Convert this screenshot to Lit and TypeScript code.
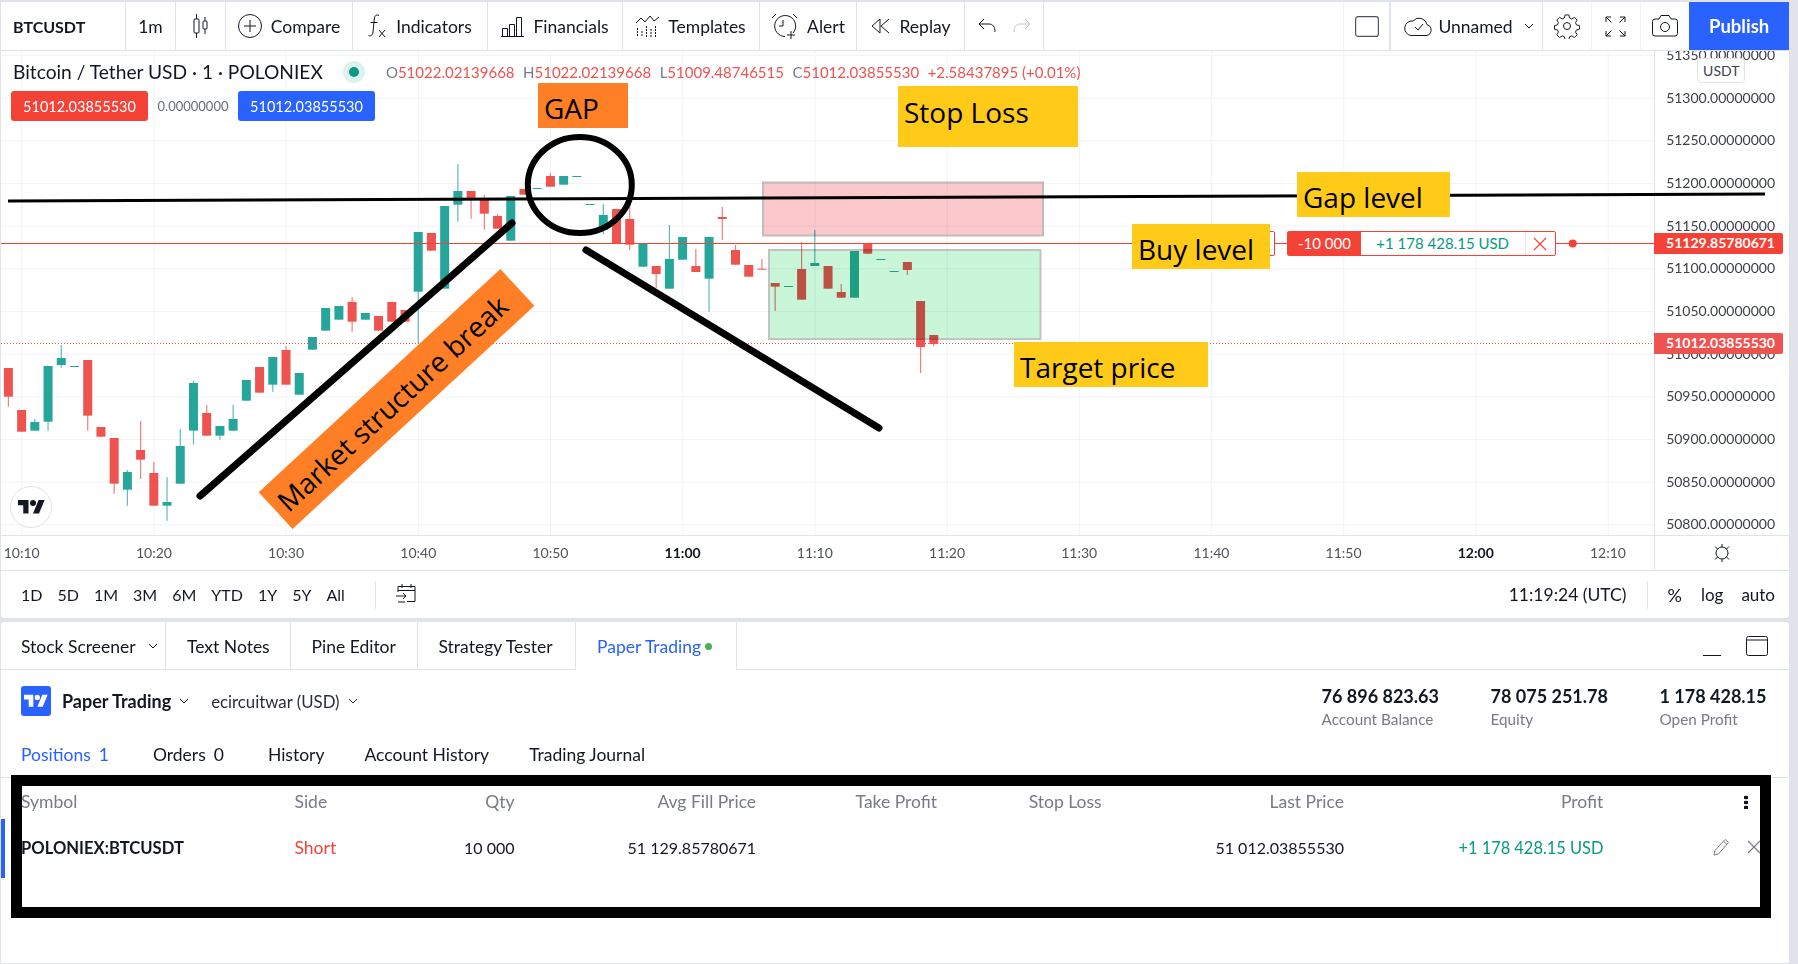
import { LitElement, html, svg, css } from "lit";
import { customElement } from "lit/decorators.js";

// [index, colour, bodyTop, bodyBottom, wickTop, wickBottom]
// y values are measured from the crop: page y = 130 + v / 3
type Candle = [number, "g" | "r", number, number, number?, number?];
const CANDLES: Candle[] = [
  [0, "r", 714, 800, 714, 830], [1, "r", 840, 905], [2, "g", 876, 902, 867], [3, "g", 708, 875, 708, 902],
  [4, "g", 684, 705, 645, 713], [5, "g", 708, 710], [6, "r", 690, 857, 690, 902], [7, "r", 891, 920],
  [8, "r", 924, 1061, 924, 1091], [9, "g", 1026, 1079, 1020, 1127], [10, "r", 960, 989, 873, 1047], [11, "r", 1029, 1127, 996],
  [12, "g", 1116, 1127, 1041, 1172], [13, "g", 948, 1061, 897], [14, "g", 759, 902, 753, 944], [15, "r", 849, 917, 825],
  [16, "g", 888, 917, 888, 929], [17, "g", 867, 902, 825], [18, "g", 750, 812], [19, "r", 711, 788],
  [20, "g", 681, 764, 681, 785], [21, "r", 660, 764, 648], [22, "g", 729, 794], [23, "g", 621, 659],
  [24, "g", 534, 602], [25, "g", 528, 569], [26, "r", 516, 575, 501, 605], [27, "g", 549, 569],
  [28, "r", 558, 602], [29, "r", 516, 575], [30, "r", 540, 575], [31, "g", 306, 485, 306, 640],
  [32, "r", 309, 362], [33, "g", 228, 476], [34, "g", 183, 224, 102, 275], [35, "r", 183, 205, 183, 266],
  [36, "r", 204, 251, 195, 299], [37, "r", 258, 296, 252], [38, "g", 198, 332], [39, "r", 177, 194],
  [40, "g", 174, 176], [41, "r", 138, 170, 129], [42, "g", 138, 164], [43, "g", 138, 140],
  [44, "g", 222, 224], [45, "g", 255, 300, 222, 312], [46, "r", 237, 340], [47, "r", 267, 344, 213, 360],
  [48, "g", 341, 410], [49, "r", 408, 432, 408, 475], [50, "g", 387, 476, 285], [51, "g", 321, 389],
  [52, "r", 408, 426, 357], [53, "g", 321, 446, 321, 545], [54, "r", 261, 267, 231, 330], [55, "r", 360, 404, 345],
  [56, "r", 405, 440], [57, "r", 416, 418, 387], [58, "r", 459, 470, 459, 543], [59, "g", 468, 470],
  [60, "r", 417, 509, 336], [61, "g", 399, 408, 300], [62, "r", 408, 476], [63, "r", 486, 503, 462],
  [64, "g", 363, 503], [65, "r", 340, 371], [66, "g", 387, 389], [67, "g", 423, 425],
  [68, "r", 396, 420, 396, 435], [69, "r", 513, 651, 513, 729], [70, "r", 615, 642, 615, 648],
];

const PRICES = ["51350", "51300", "51250", "51200", "51150", "51100", "51050", "51000", "50950", "50900", "50850", "50800"];
const TIMES = ["10:10", "10:20", "10:30", "10:40", "10:50", "11:00", "11:10", "11:20", "11:30", "11:40", "11:50", "12:00", "12:10"];
const RANGES = ["1D", "5D", "1M", "3M", "6M", "YTD", "1Y", "5Y", "All"];

const cy = (v: number) => 130 + v / 3;

const chevron = html`<svg class="chev" width="10" height="6" viewBox="0 0 10 6"><path d="M1 1l4 4 4-4" fill="none" stroke="currentColor"/></svg>`;
const tvPath = svg`<path d="M14 22H7V11H0V4h14v18zM28 22h-8l7.500-18h8L28 22z"/><circle cx="20" cy="8" r="4"/>`;

const ic = {
  candles: html`<svg width="16" height="26" viewBox="0 0 16 26" fill="none" stroke="currentColor"><path d="M3.500 1v5M3.500 20v5M12 4v4M12 16v5"/><rect x="1" y="6" width="5" height="14" rx="1"/><rect x="10" y="8" width="4" height="8" rx="1"/></svg>`,
  compare: html`<svg width="24" height="24" viewBox="0 0 24 24" fill="none" stroke="currentColor"><circle cx="12" cy="12" r="11.500"/><path d="M12 6v12M6 12h12"/></svg>`,
  fx: html`<svg width="19" height="26" viewBox="0 0 19 26" fill="none" stroke="currentColor"><path d="M11 2.500C8 1 6.500 3 6.300 6L5 19c-.3 3-2 4.500-4.500 3.500M2.500 9.500h7M11 17l6 7M17 17l-6 7"/></svg>`,
  financials: html`<svg width="23" height="21" viewBox="0 0 23 21" fill="none" stroke="currentColor"><path d="M0 20.500h23M1.500 20.500v-8h5v8M8.500 20.500v-12h5v12M15.500 20.500V1.500h5v19"/></svg>`,
  templates: html`<svg width="23" height="22" viewBox="0 0 23 22" fill="none" stroke="currentColor"><path d="M0 8l5-5 4 4 5-6 4 5 5-4"/><path d="M1.500 13v9M6 16v6M10.500 11v11M15 14v8M19.500 11v11" stroke-dasharray="2 1"/></svg>`,
  alert: html`<svg width="27" height="27" viewBox="0 0 27 27" fill="none" stroke="currentColor"><path d="M14 23.500a10.500 10.500 0 1 1 8-3.500"/><path d="M12 7v6h-4M1 5l4-4M22 1l4 4M20 18v8M16 22h8"/></svg>`,
  replay: html`<svg width="20" height="18" viewBox="0 0 20 18" fill="none" stroke="currentColor"><path d="M10 2L2 9l8 7zM19 2l-8 7 8 7"/></svg>`,
  undo: html`<svg width="18" height="16" viewBox="0 0 18 16" fill="none" stroke="currentColor"><path d="M6 1L1 6l5 5M1 6h10c4 0 6 3 6 8"/></svg>`,
  redo: html`<svg width="18" height="16" viewBox="0 0 18 16" fill="none" stroke="#c1c4cd"><path d="M12 1l5 5-5 5M17 6H7c-4 0-6 3-6 8"/></svg>`,
  rect: html`<svg width="24" height="21" viewBox="0 0 24 21" fill="none" stroke="#50535e" stroke-width="1.200"><rect x=".6" y=".6" width="22.800" height="19.800" rx="2.500"/></svg>`,
  cloud: html`<svg width="28" height="20" viewBox="0 0 28 20" fill="none" stroke="currentColor"><path d="M7 19.500h15a5.500 5.500 0 0 0 1-10.800A8 8 0 0 0 9 5 7.300 7.300 0 0 0 7 19.500z"/><path d="M11 11l3 3 5-6"/></svg>`,
  gear: html`<svg width="26" height="26" viewBox="0 0 26 26" fill="none" stroke="currentColor"><circle cx="13" cy="13" r="3.500"/><path d="M11 1.500h4l.7 3.200 2.300 1 2.800-1.700 2.800 2.800-1.700 2.800 1 2.300 3.100.7v3.800l-3.100.7-1 2.300 1.700 2.800-2.800 2.800-2.800-1.700-2.300 1-.7 3.200h-4l-.7-3.200-2.300-1-2.800 1.700-2.800-2.800 1.700-2.800-1-2.300-3.100-.7v-3.800l3.100-.7 1-2.300-1.700-2.800 2.800-2.800 2.800 1.700 2.300-1z" transform="translate(.5 .5) scale(.96)"/></svg>`,
  full: html`<svg width="21" height="21" viewBox="0 0 21 21" fill="none" stroke="currentColor"><path d="M1 6V1h5M1 1l5.500 5.500M15 1h5v5M20 1l-5.500 5.500M1 15v5h5M1 20l5.500-5.500M20 15v5h-5M20 20l-5.500-5.500"/></svg>`,
  camera: html`<svg width="26" height="22" viewBox="0 0 26 22" fill="none" stroke="currentColor"><path d="M7 4l2-3.500h8L19 4h4a2.500 2.500 0 0 1 2.500 2.500v12A2.500 2.500 0 0 1 23 21H3A2.500 2.500 0 0 1 .5 18.500v-12A2.500 2.500 0 0 1 3 4z"/><circle cx="13" cy="12" r="4.500"/></svg>`,
  sun: html`<svg width="18" height="20" viewBox="0 0 18 20" fill="none" stroke="#131722"><circle cx="9" cy="10" r="6"/><path d="M9 1v3M9 16v3M2 3.500l2.500 2.500M16 3.500L13.500 6M2 16.500L4.500 14M16 16.500L13.500 14"/></svg>`,
  calendar: html`<svg width="21" height="20" viewBox="0 0 21 20" fill="none" stroke="currentColor"><path d="M2 9V3.500h17v15h-8M2 7.500h17M6 1v4M15 1v4M0 13h10M7 10l3 3-3 3M2 19h7"/></svg>`,
  pencil: html`<svg width="17" height="18" viewBox="0 0 17 18" fill="none" stroke="#787b86"><path d="M12 1.500l3.500 3L5.500 16 1 17l1-4.500zM10.500 3.500L14 6.500"/></svg>`,
  close: html`<svg width="14" height="14" viewBox="0 0 14 14" fill="none" stroke="currentColor" stroke-width="1.200"><path d="M1 1l12 12M13 1L1 13"/></svg>`,
  maximize: html`<svg width="22" height="20" viewBox="0 0 22 20" fill="none" stroke="#131722"><rect x=".5" y=".5" width="21" height="19" rx="2"/><path d="M1 4h20"/></svg>`,
};

@customElement("app-root")
export class AppRoot extends LitElement {
  static styles = css`
    :host {
      display: block;
      position: relative;
      width: 1798px;
      height: 964px;
      overflow: hidden;
      padding: 2px 9px 0 1px;
      box-sizing: border-box;
      background: #e0e3eb;
      color: #131722;
      font: 17.500px Lato, "Noto Sans", sans-serif;
    }
    .toolbar {
      display: grid;
      grid-template-columns: 125px 50px 50px 127px 135px 135px 137px 97px 108px 79px 1fr 47.500px 151.200px 49.300px 48.600px 48.700px 99.800px;
      height: 48px;
      background: #fff;
      margin-bottom: 1px;
    }
    .cell {
      display: flex;
      align-items: center;
      justify-content: center;
      gap: 9px;
      border-right: 1px solid #e0e3eb;
      min-width: 0;
      white-space: nowrap;
    }
    .cell.light { border-right-color: #f0f3fa; }
    .cell.heavy { border-right: 2px solid #e0e3eb; }
    .cell.none { border-right: 0; }
    .cell.symbol { justify-content: flex-start; padding-left: 12px; font-size: 16px; font-weight: 700; }
    .cell.history { gap: 17px; }
    .cell.save { gap: 6px; padding-left: 5px; }
    .cell.save .chev { margin-left: 5px; }
    .publish {
      display: flex;
      align-items: center;
      justify-content: center;
      background: #2962ff;
      color: #fff;
      font-size: 18.500px;
      font-weight: 700;
    }
    .chart {
      background: #fff;
      border-radius: 0 0 4px 4px;
    }
    .main {
      position: relative;
      display: grid;
      grid-template-columns: 1653px 1fr;
      height: 484px;
      overflow: hidden;
      border-bottom: 1px solid #e0e3eb;
    }
    .plot { display: block; }
    .axis {
      border-left: 1px solid #e0e3eb;
      margin-top: -17px;
      font-size: 14px;
      color: #3d4049;
    }
    .axis div {
      height: 42.667px;
      line-height: 42.667px;
      padding-right: 14px;
      text-align: right;
    }
    .legend {
      position: absolute;
      left: 12px;
      top: 9px;
      display: flex;
      align-items: center;
      white-space: nowrap;
    }
    .title { font-size: 19.200px; }
    .status {
      width: 10px;
      height: 10px;
      border-radius: 50%;
      margin: 0 27px 0 26px;
      background: #089981;
      box-shadow: 0 0 0 6px #dff1ee;
    }
    .ohlc { font-size: 15px; color: #ef5350; display: flex; gap: 8.500px; }
    .ohlc b { font-weight: 400; color: #787b86; }
    .trade {
      position: absolute;
      left: 10px;
      top: 40px;
      display: flex;
      align-items: center;
      font-size: 13px;
      color: #6a6d78;
    }
    .trade span {
      display: flex;
      align-items: center;
      justify-content: center;
      width: 137px;
      height: 30px;
      border-radius: 3px;
      font-size: 14.500px;
      color: #fff;
      background: #f44336;
    }
    .trade .buy { background: #2962ff; }
    .trade em { width: 90px; text-align: center; font-style: normal; }
    .unit {
      position: absolute;
      left: 1696.300px;
      top: 7px;
      width: 48px;
      height: 25px;
      box-sizing: border-box;
      border: 1px solid #e0e3eb;
      border-radius: 4px;
      background: #fff;
      text-align: center;
      font-size: 14px;
      line-height: 23px;
      color: #3d4049;
    }
    .tag {
      position: absolute;
      left: 1653px;
      width: 129px;
      height: 20.500px;
      line-height: 20.500px;
      padding-right: 8px;
      box-sizing: border-box;
      border-radius: 0 2px 2px 0;
      text-align: right;
      color: #fff;
      font-size: 14px;
      font-weight: 700;
    }
    .tag.entry { top: 182.300px; background: #f44336; }
    .tag.last { top: 282.300px; background: #ef5350; }
    .stub {
      position: absolute;
      left: 1260px;
      top: 180px;
      width: 13.500px;
      height: 25px;
      box-sizing: border-box;
      border: 1px solid #f44336;
      border-radius: 2px;
      background: #fff;
    }
    .order {
      position: absolute;
      left: 1286.300px;
      top: 180px;
      width: 268.400px;
      height: 25px;
      box-sizing: border-box;
      display: grid;
      grid-template-columns: 72.400px 1fr 30px;
      align-items: stretch;
      border: 1px solid #f44336;
      border-radius: 2px;
      background: #fff;
      font-size: 15px;
      line-height: 23px;
      text-align: center;
    }
    .order .qty { background: #f44336; color: #fff; }
    .order .pnl { color: #089981; }
    .order .x {
      display: flex;
      align-items: center;
      justify-content: center;
      color: #f44336;
      border-left: 1px solid #f5e3e3;
    }
    .logo {
      position: absolute;
      left: 9px;
      top: 435px;
      width: 42px;
      height: 42px;
      box-sizing: border-box;
      display: flex;
      align-items: center;
      justify-content: center;
      border: 1px solid #e0e3eb;
      border-radius: 50%;
      background: #fff;
    }
    .times {
      display: grid;
      grid-template-columns: 1653px 1fr;
      height: 34px;
      border-bottom: 1px solid #e0e3eb;
      overflow: hidden;
      font-size: 14px;
      color: #50535e;
    }
    .ticks { display: flex; margin-left: -45.400px; }
    .ticks span { flex: 0 0 132.200px; text-align: center; line-height: 34px; }
    .ticks .major { font-weight: 700; color: #131722; }
    .gear {
      display: flex;
      align-items: center;
      justify-content: center;
      border-left: 1px solid #e0e3eb;
    }
    .ranges {
      display: flex;
      align-items: center;
      height: 47px;
      padding: 0 14px 0 20px;
      font-size: 16px;
      white-space: nowrap;
    }
    .ranges .r { margin-right: 15px; }
    .ranges .sep { width: 1px; height: 28px; background: #e0e3eb; }
    .ranges .main-sep { margin-left: 15px; }
    .ranges .first { margin: 0 20px 0 20px; }
    .ranges .clock { margin-left: auto; margin-right: 21px; font-size: 17.500px; }
    .ranges .tail { margin-left: 19px; font-size: 18px; }
    .ranges .log { margin-left: 19px; font-size: 17px; }
    .ranges .auto { margin-left: 18px; font-size: 17px; }
    .panel {
      margin-top: 4px;
      height: 341px;
      background: #fff;
      border-radius: 4px 4px 0 0;
    }
    .tabs {
      display: grid;
      grid-template-columns: 165px 124.500px 127px 158.500px 161px 1fr;
      height: 48px;
      box-sizing: border-box;
      white-space: nowrap;
    }
    .tab {
      display: flex;
      align-items: center;
      padding: 1px 0 0 20px;
      gap: 12px;
      border-right: 1px solid #e0e3eb;
      border-bottom: 1px solid #e0e3eb;
    }
    .tab.active { color: #2962ff; border-bottom: 0; gap: 4px; padding-left: 21px; }
    .tab i { width: 7px; height: 7px; border-radius: 50%; background: #4caf50; }
    .tab.centered { padding-left: 21px; }
    .tab-tools {
      display: flex;
      align-items: center;
      justify-content: flex-end;
      gap: 25.500px;
      padding-right: 21px;
      border-bottom: 1px solid #e0e3eb;
    }
    .dash { width: 18px; height: 1px; background: #131722; margin-top: 19px; }
    .account {
      display: flex;
      height: 60px;
      padding: 16px 0 0 20px;
      box-sizing: border-box;
      white-space: nowrap;
    }
    .tv {
      width: 30px;
      height: 30px;
      border-radius: 3px;
      display: flex;
      align-items: center;
      justify-content: center;
      background: #2962ff;
      fill: #fff;
    }
    .broker {
      display: flex;
      align-items: center;
      height: 30px;
      margin-left: 11px;
      gap: 8px;
      font-size: 18px;
      font-weight: 700;
    }
    .acct {
      display: flex;
      align-items: center;
      height: 30px;
      margin-left: 22px;
      gap: 8px;
      font-size: 16.800px;
      color: #2a2e39;
    }
    .stats { display: flex; margin-left: auto; }
    .stat { width: 169px; }
    .stat.end { width: 129.500px; }
    .stat strong { display: block; font-size: 18px; font-weight: 700; line-height: 20px; }
    .stat span { display: block; font-size: 15.300px; line-height: 20px; margin-top: 3px; color: #787b86; }
    .subtabs {
      display: flex;
      align-items: center;
      height: 48px;
      padding: 1px 0 0 20px;
      box-sizing: border-box;
      border-bottom: 1px solid #e0e3eb;
      white-space: nowrap;
    }
    .subtabs span { margin-right: 40px; }
    .subtabs .on { color: #2962ff; }
    .subtabs b { font-weight: 400; margin: 0 4px 0 8px; }
    .cols {
      display: grid;
      grid-template-columns: 273.500px 100px 120px 241.600px 181px 164.600px 242.300px 259.400px 1fr;
      align-items: center;
      white-space: nowrap;
    }
    .head {
      height: 41px;
      padding: 6px 0 0 20px;
      box-sizing: border-box;
      color: #787b86;
    }
    .row {
      height: 59px;
      padding: 0 0 3px 16px;
      box-sizing: border-box;
      border-left: 4px solid #2962ff;
      font-size: 16px;
    }
    .num { text-align: right; }
    .sym { font-size: 16.600px; font-weight: 700; margin-top: 2px; }
    .short { font-size: 17.500px; color: #f44336; }
    .up { font-size: 16.400px; color: #089981; }
    .kebab {
      justify-self: start;
      margin-left: 141px;
      width: 4px;
      height: 14px;
      background: radial-gradient(circle, #131722 1.900px, transparent 2.100px) 0 0 / 4px 5px;
    }
    .actions {
      display: flex;
      align-items: center;
      gap: 17px;
      margin-left: 110px;
      color: #787b86;
    }
    .marks { position: absolute; left: 0; top: 0; pointer-events: none; }
    .frame {
      position: absolute;
      left: 11px;
      top: 775px;
      width: 1760px;
      height: 143px;
      box-sizing: border-box;
      border: 11px solid #000;
    }
    .note {
      position: absolute;
      box-sizing: border-box;
      display: flex;
      align-items: center;
      padding: 4px 0 0 6px;
      font: 28px "Open Sans", "Noto Sans", sans-serif;
      color: #000;
      background: #ffca18;
      white-space: nowrap;
    }
    .note.gap { left: 538px; top: 83px; width: 90px; height: 45px; background: #ff7f27; }
    .note.stop { left: 898px; top: 86px; width: 180px; height: 61px; padding: 0 0 10px 6px; }
    .note.level { left: 1297px; top: 172px; width: 153px; height: 45px; }
    .note.buy { left: 1132px; top: 224px; width: 138px; height: 45px; }
    .note.target { left: 1014px; top: 342px; width: 194px; height: 45px; }
    .note.break {
      left: 231.500px;
      top: 374px;
      width: 329px;
      height: 50px;
      padding: 0 12px 0 0;
      justify-content: center;
      background: #ff7f27;
      transform: rotate(-42.700deg);
    }
  `;

  private plot() {
    const vLines = TIMES.map((_, i) => 21.8 + i * 132.2);
    const hLines = PRICES.map((_, i) => 55.4 + i * 42.667);
    return svg`
      <g stroke="#f0f3fa">
        ${vLines.map((x) => svg`<path d="M${x} 51V535"/>`)}
        ${hLines.map((y) => svg`<path d="M1 ${y}H1654"/>`)}
      </g>
      ${CANDLES.map(([i, c, top, bottom, wTop, wBottom]) => {
        const x = 8.4 + i * 13.22;
        const fill = c === "g" ? "#26a69a" : "#ef5350";
        return svg`
          <path d="M${x} ${cy(wTop ?? top)}V${cy(wBottom ?? bottom)}" stroke=${fill} stroke-width="1.200" opacity=".75"/>
          <rect x=${x - 4.5} y=${cy(top)} width="9" height=${Math.max(1, (bottom - top) / 3)} fill=${fill}/>`;
      })}
      <path d="M1 243.500H1654" stroke="#f44336"/>
      <path d="M1 343.500H1654" stroke="#ef5350" stroke-dasharray="1 2"/>
      <circle cx="1572.700" cy="243.500" r="4" fill="#f44336"/>
      <g style="mix-blend-mode:multiply">
        <rect x="763" y="182.500" width="280" height="53" fill="#fbc8cb" stroke="#c2bdbd" stroke-width="2"/>
        <rect x="769" y="250" width="271.500" height="89" fill="#c9f5d8" stroke="#c2c4c2" stroke-width="2"/>
      </g>`;
  }

  render() {
    return html`
      <div class="toolbar">
        <div class="cell symbol">BTCUSDT</div>
        <div class="cell">1m</div>
        <div class="cell">${ic.candles}</div>
        <div class="cell">${ic.compare}Compare</div>
        <div class="cell">${ic.fx}Indicators</div>
        <div class="cell">${ic.financials}Financials</div>
        <div class="cell">${ic.templates}Templates</div>
        <div class="cell">${ic.alert}Alert</div>
        <div class="cell">${ic.replay}Replay</div>
        <div class="cell history">${ic.undo}${ic.redo}</div>
        <div class="cell light"></div>
        <div class="cell heavy">${ic.rect}</div>
        <div class="cell save">${ic.cloud}Unnamed ${chevron}</div>
        <div class="cell light">${ic.gear}</div>
        <div class="cell light">${ic.full}</div>
        <div class="cell none">${ic.camera}</div>
        <div class="publish">Publish</div>
      </div>

      <div class="chart">
        <div class="main">
          <svg class="plot" width="1653" height="484" viewBox="1 51 1653 484">${this.plot()}</svg>
          <div class="axis">${PRICES.map((p) => html`<div>${p}.00000000</div>`)}</div>
          <div class="legend">
            <span class="title">Bitcoin / Tether USD · 1 · POLONIEX</span>
            <span class="status"></span>
            <span class="ohlc">
              <span><b>O</b>51022.02139668</span>
              <span><b>H</b>51022.02139668</span>
              <span><b>L</b>51009.48746515</span>
              <span><b>C</b>51012.03855530</span>
              <span>+2.58437895 (+0.01%)</span>
            </span>
          </div>
          <div class="trade">
            <span>51012.03855530</span><em>0.00000000</em><span class="buy">51012.03855530</span>
          </div>
          <div class="unit">USDT</div>
          <div class="logo"><svg width="27" height="21" viewBox="0 0 36 28" fill="#131722">${tvPath}</svg></div>
          <div class="stub"></div>
          <div class="order">
            <span class="qty">-10 000</span>
            <span class="pnl">+1 178 428.15 USD</span>
            <span class="x">${ic.close}</span>
          </div>
          <div class="tag entry">51129.85780671</div>
          <div class="tag last">51012.03855530</div>
        </div>
        <div class="times">
          <div class="ticks">
            ${TIMES.map((t) => html`<span class=${t.endsWith(":00") ? "major" : ""}>${t}</span>`)}
          </div>
          <div class="gear">${ic.sun}</div>
        </div>
        <div class="ranges">
          ${RANGES.map((r) => html`<span class="r">${r}</span>`)}
          <span class="sep main-sep"></span>
          <span class="first">${ic.calendar}</span>
          <span class="clock">11:19:24 (UTC)</span>
          <span class="sep"></span>
          <span class="tail">%</span>
          <span class="log">log</span>
          <span class="auto">auto</span>
        </div>
      </div>

      <div class="panel">
        <div class="tabs">
          <div class="tab">Stock Screener ${chevron}</div>
          <div class="tab centered">Text Notes</div>
          <div class="tab centered">Pine Editor</div>
          <div class="tab centered">Strategy Tester</div>
          <div class="tab active">Paper Trading<i></i></div>
          <div class="tab-tools"><span class="dash"></span>${ic.maximize}</div>
        </div>
        <div class="account">
          <div class="tv"><svg width="24" height="19" viewBox="0 0 36 28">${tvPath}</svg></div>
          <div class="broker">Paper Trading ${chevron}</div>
          <div class="acct">ecircuitwar (USD) ${chevron}</div>
          <div class="stats">
            <div class="stat"><strong>76 896 823.63</strong><span>Account Balance</span></div>
            <div class="stat"><strong>78 075 251.78</strong><span>Equity</span></div>
            <div class="stat end"><strong>1 178 428.15</strong><span>Open Profit</span></div>
          </div>
        </div>
        <div class="subtabs">
          <span class="on">Positions<b>1</b></span>
          <span>Orders<b>0</b></span>
          <span>History</span>
          <span>Account History</span>
          <span>Trading Journal</span>
        </div>
        <div class="cols head">
          <span>Symbol</span><span>Side</span>
          <span class="num">Qty</span><span class="num">Avg Fill Price</span>
          <span class="num">Take Profit</span><span class="num">Stop Loss</span>
          <span class="num">Last Price</span><span class="num">Profit</span>
          <span class="kebab"></span>
        </div>
        <div class="cols row">
          <span class="sym">POLONIEX:BTCUSDT</span><span class="short">Short</span>
          <span class="num">10 000</span><span class="num">51 129.85780671</span>
          <span></span><span></span>
          <span class="num">51 012.03855530</span><span class="num up">+1 178 428.15 USD</span>
          <span class="actions">${ic.pencil}${ic.close}</span>
        </div>
      </div>

      <svg class="marks" width="1798" height="964" fill="none" stroke="#000">
        <path d="M8 201L1765 194" stroke-width="3"/>
        <ellipse cx="579.800" cy="185" rx="52" ry="48" stroke-width="6"/>
        <path d="M200 496L512 223M586 250L879 428" stroke-width="7" stroke-linecap="round"/>
      </svg>
      <div class="frame"></div>
      <div class="note gap">GAP</div>
      <div class="note stop">Stop Loss</div>
      <div class="note level">Gap level</div>
      <div class="note buy">Buy level</div>
      <div class="note target">Target price</div>
      <div class="note break">Market structure break</div>
    `;
  }
}
